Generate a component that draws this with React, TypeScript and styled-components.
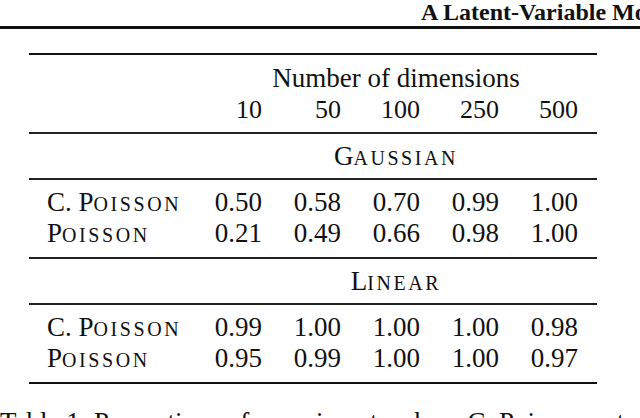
import React from "react";
import styled, { createGlobalStyle } from "styled-components";

const Global = createGlobalStyle`
  html, body { margin: 0; padding: 0; background: #ffffff; }
  body {
    width: 640px;
    height: 418px;
    overflow: hidden;
    font-family: "Liberation Serif", "Times New Roman", serif;
    color: #111111;
  }
`;

const Page = styled.div`
  width: 640px;
  height: 418px;
  overflow: hidden;
  display: block;
`;

const RunningHead = styled.header`
  height: 29px;
  box-sizing: border-box;
  border-bottom: 3px solid #111111;
  padding-left: 421px;
  white-space: nowrap;
  overflow: hidden;
  font-weight: 700;
  font-size: 24px;
  line-height: 25px;
`;

const Table = styled.div`
  margin: 24px 0 0 29px;
  width: 568px;
  display: flex;
  flex-direction: column;
  border-top: 2px solid #111111;
  border-bottom: 2px solid #111111;
  font-size: 27px;
  line-height: 31px;
`;

type GroupKind = "head" | "title" | "data";

const pads: Record<GroupKind, string> = {
  head: "8px 19px 7px 18px",
  title: "7px 19px 6px 18px",
  data: "7px 19px 8px 18px",
};

const Group = styled.div<{ $kind: GroupKind }>`
  display: grid;
  flex-shrink: 0;
  grid-template-columns: 1fr repeat(5, 48px);
  column-gap: 31px;
  padding: ${(p) => pads[p.$kind]};
  border-top: ${(p) => (p.$kind === "head" ? "none" : "2px solid #222222")};
`;

const Label = styled.div`
  white-space: nowrap;
  text-align: left;
`;

const Num = styled.div<{ $size?: number }>`
  text-align: right;
  white-space: nowrap;
  font-size: ${(p) => (p.$size ? `${p.$size}px` : "inherit")};
`;

const Span = styled.div`
  grid-column: 2 / -1;
  text-align: center;
  white-space: nowrap;
`;

const SmallCaps = styled.span`
  font-size: 0.74em;
  line-height: 1;
  letter-spacing: 0.13em;
`;

const Caption = styled.p`
  margin: 23px 0 0 0;
  font-size: 27px;
  line-height: 31px;
  white-space: nowrap;
`;

const Sc: React.FC<{ first: string; rest: string }> = ({ first, rest }) => (
  <>
    {first}
    <SmallCaps>{rest}</SmallCaps>
  </>
);

type Row = { label: React.ReactNode; values: string[] };

const dims = ["10", "50", "100", "250", "500"];

const groups: { title: React.ReactNode; rows: Row[] }[] = [
  {
    title: <Sc first="G" rest="AUSSIAN" />,
    rows: [
      { label: <>C. <Sc first="P" rest="OISSON" /></>, values: ["0.50", "0.58", "0.70", "0.99", "1.00"] },
      { label: <Sc first="P" rest="OISSON" />, values: ["0.21", "0.49", "0.66", "0.98", "1.00"] },
    ],
  },
  {
    title: <Sc first="L" rest="INEAR" />,
    rows: [
      { label: <>C. <Sc first="P" rest="OISSON" /></>, values: ["0.99", "1.00", "1.00", "1.00", "0.98"] },
      { label: <Sc first="P" rest="OISSON" />, values: ["0.95", "0.99", "1.00", "1.00", "0.97"] },
    ],
  },
];

export default function App() {
  return (
    <Page>
      <Global />
      <RunningHead>A Latent-Variable Model for Intrinsic Probing</RunningHead>
      <Table>
        <Group $kind="head">
          <Span>Number of dimensions</Span>
          <Label />
          {dims.map((d) => (
            <Num key={d} $size={26}>
              {d}
            </Num>
          ))}
        </Group>
        {groups.map((g, gi) => (
          <React.Fragment key={gi}>
            <Group $kind="title">
              <Span>{g.title}</Span>
            </Group>
            <Group $kind="data">
              {g.rows.map((r, ri) => (
                <React.Fragment key={ri}>
                  <Label>{r.label}</Label>
                  {r.values.map((v, vi) => (
                    <Num key={vi}>{v}</Num>
                  ))}
                </React.Fragment>
              ))}
            </Group>
          </React.Fragment>
        ))}
      </Table>
      <Caption>Table 1: Proportions of experiments where C. Poisson outperforms Poisson</Caption>
    </Page>
  );
}
